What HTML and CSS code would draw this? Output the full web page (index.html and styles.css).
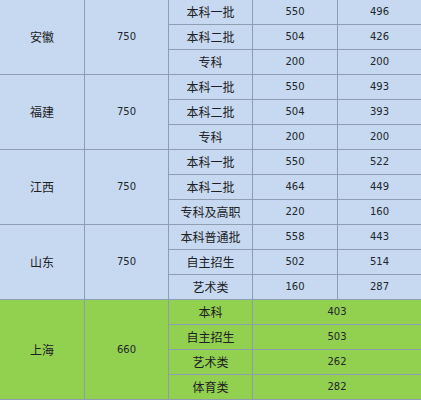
FILE: index.html
```html
<!DOCTYPE html>
<html>
<head>
<meta charset="utf-8">
<link rel="stylesheet" href="styles.css">
</head>
<body>
<div class="sheet">
  <div class="c blue prov r3">安徽</div>
  <div class="c blue num r3">750</div>
  <div class="c blue">本科一批</div><div class="c blue num">550</div><div class="c blue num">496</div>
  <div class="c blue">本科二批</div><div class="c blue num">504</div><div class="c blue num">426</div>
  <div class="c blue">专科</div><div class="c blue num">200</div><div class="c blue num">200</div>

  <div class="c blue prov r3">福建</div>
  <div class="c blue num r3">750</div>
  <div class="c blue">本科一批</div><div class="c blue num">550</div><div class="c blue num">493</div>
  <div class="c blue">本科二批</div><div class="c blue num">504</div><div class="c blue num">393</div>
  <div class="c blue">专科</div><div class="c blue num">200</div><div class="c blue num">200</div>

  <div class="c blue prov r3">江西</div>
  <div class="c blue num r3">750</div>
  <div class="c blue">本科一批</div><div class="c blue num">550</div><div class="c blue num">522</div>
  <div class="c blue">本科二批</div><div class="c blue num">464</div><div class="c blue num">449</div>
  <div class="c blue">专科及高职</div><div class="c blue num">220</div><div class="c blue num">160</div>

  <div class="c blue prov r3">山东</div>
  <div class="c blue num r3">750</div>
  <div class="c blue">本科普通批</div><div class="c blue num">558</div><div class="c blue num">443</div>
  <div class="c blue">自主招生</div><div class="c blue num">502</div><div class="c blue num">514</div>
  <div class="c blue">艺术类</div><div class="c blue num">160</div><div class="c blue num">287</div>

  <div class="c green prov r4">上海</div>
  <div class="c green num r4">660</div>
  <div class="c green">本科</div><div class="c green num s2">403</div>
  <div class="c green">自主招生</div><div class="c green num s2">503</div>
  <div class="c green">艺术类</div><div class="c green num s2">262</div>
  <div class="c green">体育类</div><div class="c green num s2">282</div>
</div>
</body>
</html>
```

FILE: styles.css
```css
html, body {
  margin: 0;
  padding: 0;
  background: #ffffff;
}
body {
  overflow: hidden;
}
.sheet {
  display: grid;
  grid-template-columns: 84px 83px 83px 84px 83px;
  grid-auto-rows: 24px;
  gap: 1px;
  padding: 1px;
  margin: -1px 0 0 -1px;
  width: max-content;
  background: #8d9eb2;
}
.c {
  display: flex;
  align-items: center;
  justify-content: center;
  font-family: "Noto Sans CJK SC", "Noto Sans", sans-serif;
  font-size: 12px;
  color: #1e2124;
  line-height: 1;
}
.blue {
  background: #c6d9f0;
}
.green {
  background: #92d050;
}
.num {
  font-family: "DejaVu Sans", Verdana, sans-serif;
  font-size: 10px;
  color: #23262a;
}
.r3 {
  grid-row: span 3;
}
.r4 {
  grid-row: span 4;
}
.s2 {
  grid-column: span 2;
}
```
